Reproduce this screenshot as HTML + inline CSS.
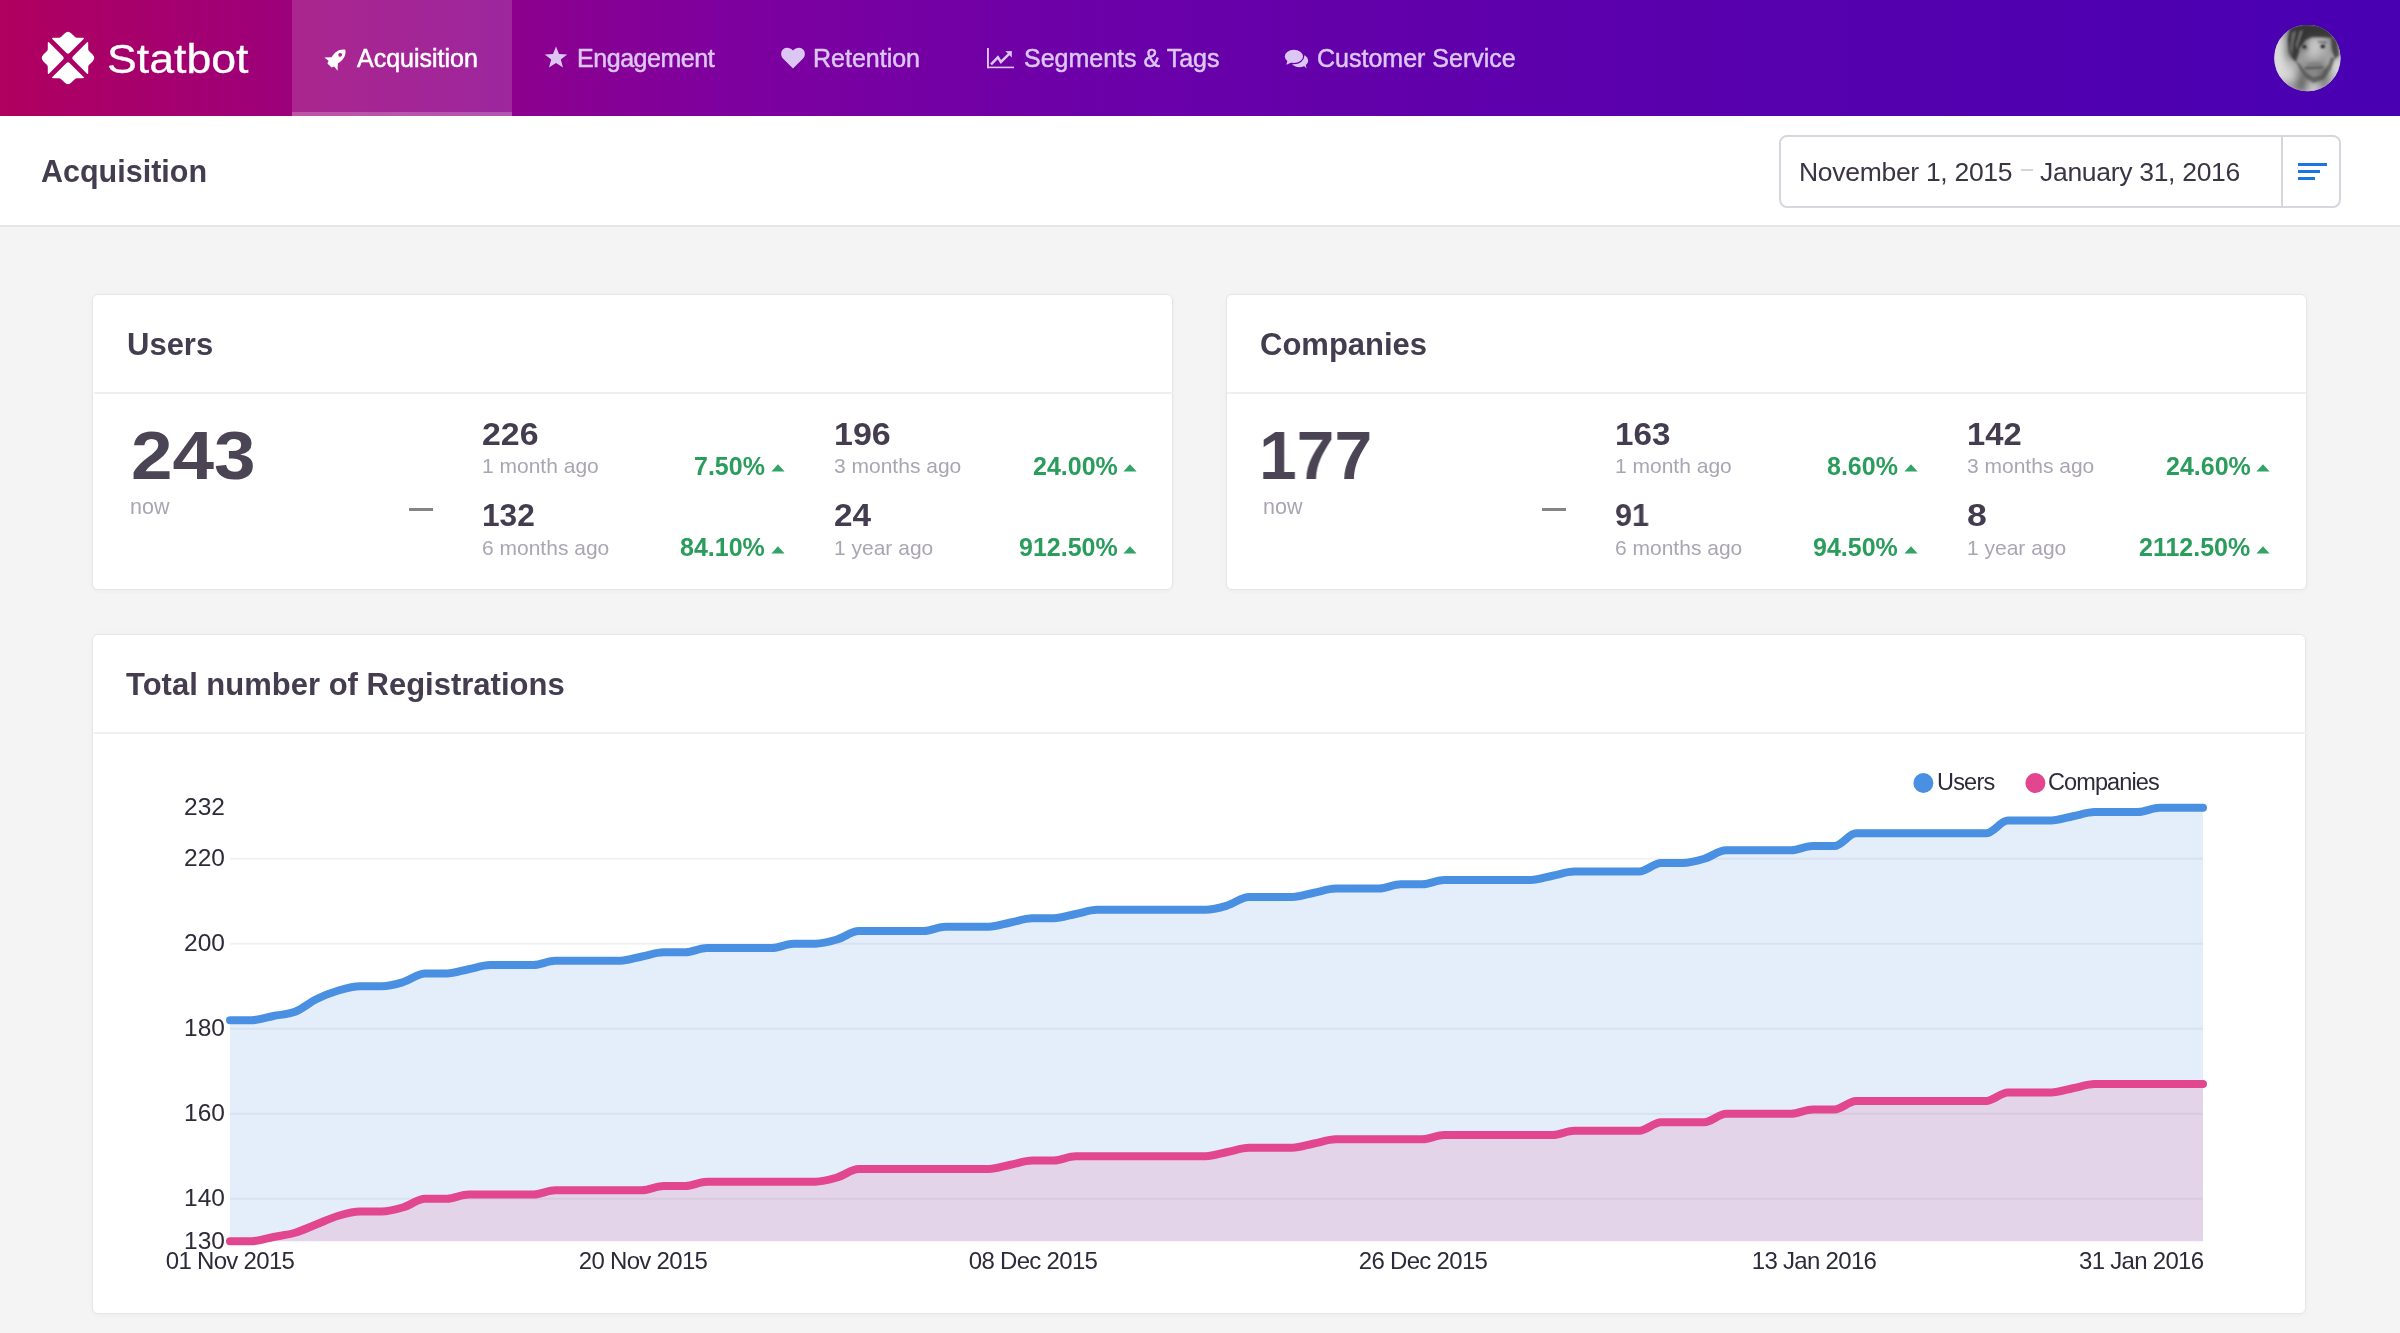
<!DOCTYPE html>
<html><head><meta charset="utf-8"><style>
html,body{margin:0;padding:0;}
body{width:2400px;height:1333px;overflow:hidden;position:relative;background:#f4f4f5;font-family:"Liberation Sans", sans-serif;}
.t{position:absolute;white-space:nowrap;will-change:transform;}
.abs{position:absolute;}
</style></head><body>
<div class="abs" style="left:0;top:0;width:2400px;height:116px;background:linear-gradient(90deg,#b0005f 0%,#9c007a 12%,#7e009e 30%,#6c00a8 45%,#5c00ac 65%,#4800b2 100%);"></div>
<div class="abs" style="left:292px;top:0;width:220px;height:116px;background:rgba(255,255,255,0.15);"></div>
<div class="abs" style="left:292px;top:112px;width:220px;height:4px;background:rgba(255,255,255,0.22);"></div>
<svg class="abs" style="left:40px;top:30px" width="56" height="56" viewBox="-28 -28 56 56">
<g fill="#fff">
<path d="M-3.4,-24.6 Q0,-28 3.4,-24.6 L6.8,-21.2 Q7.8,-20.2 9,-20.2 L14.8,-20.2 Q16.8,-20.2 15.4,-18.8 L1.5,-4.9 Q0,-3.4 -1.5,-4.9 L-15.4,-18.8 Q-16.8,-20.2 -14.8,-20.2 L-9,-20.2 Q-7.8,-20.2 -6.8,-21.2 Z"/><path d="M-3.4,-24.6 Q0,-28 3.4,-24.6 L6.8,-21.2 Q7.8,-20.2 9,-20.2 L14.8,-20.2 Q16.8,-20.2 15.4,-18.8 L1.5,-4.9 Q0,-3.4 -1.5,-4.9 L-15.4,-18.8 Q-16.8,-20.2 -14.8,-20.2 L-9,-20.2 Q-7.8,-20.2 -6.8,-21.2 Z" transform="rotate(90)"/><path d="M-3.4,-24.6 Q0,-28 3.4,-24.6 L6.8,-21.2 Q7.8,-20.2 9,-20.2 L14.8,-20.2 Q16.8,-20.2 15.4,-18.8 L1.5,-4.9 Q0,-3.4 -1.5,-4.9 L-15.4,-18.8 Q-16.8,-20.2 -14.8,-20.2 L-9,-20.2 Q-7.8,-20.2 -6.8,-21.2 Z" transform="rotate(180)"/><path d="M-3.4,-24.6 Q0,-28 3.4,-24.6 L6.8,-21.2 Q7.8,-20.2 9,-20.2 L14.8,-20.2 Q16.8,-20.2 15.4,-18.8 L1.5,-4.9 Q0,-3.4 -1.5,-4.9 L-15.4,-18.8 Q-16.8,-20.2 -14.8,-20.2 L-9,-20.2 Q-7.8,-20.2 -6.8,-21.2 Z" transform="rotate(270)"/>
</g></svg>
<div class="t" style="left:106.5px;top:38.63px;font-size:40.6px;line-height:40.6px;font-weight:400;color:#fff;transform:scaleX(1.1);transform-origin:0 0;-webkit-text-stroke:0.3px #fff;">Statbot</div>
<div class="t" style="left:357px;top:45.64px;font-size:25px;line-height:25px;font-weight:400;color:#fff;-webkit-text-stroke:0.5px currentColor;">Acquisition</div>
<div class="t" style="left:577px;top:45.64px;font-size:25px;line-height:25px;font-weight:400;color:#dcc6f3;letter-spacing:-0.45px;-webkit-text-stroke:0.5px currentColor;">Engagement</div>
<div class="t" style="left:813px;top:45.64px;font-size:25px;line-height:25px;font-weight:400;color:#dcc6f3;-webkit-text-stroke:0.5px currentColor;">Retention</div>
<div class="t" style="left:1023.5px;top:45.64px;font-size:25px;line-height:25px;font-weight:400;color:#dcc6f3;-webkit-text-stroke:0.5px currentColor;">Segments &amp; Tags</div>
<div class="t" style="left:1317px;top:45.64px;font-size:25px;line-height:25px;font-weight:400;color:#dcc6f3;-webkit-text-stroke:0.5px currentColor;">Customer Service</div>
<svg class="abs" style="left:324px;top:46px;overflow:visible" width="25" height="25" viewBox="0 0 24 24">
<g transform="rotate(45 12 12)"><path fill="#fff" fill-rule="evenodd" d="M12 0 C17 3.5 17.5 9 16.3 14.5 L21 19.5 L15.8 19 L14.8 21.5 L9.2 21.5 L8.2 19 L3 19.5 L7.7 14.5 C6.5 9 7 3.5 12 0 Z M12 5.2 a1.8 1.8 0 1 0 0.01 0 Z"/></g></svg>
<svg class="abs" style="left:544px;top:46px" width="24" height="23" viewBox="0 0 24 23">
<path fill="#dcc6f3" d="M12 0.5 L15 8 L23.2 8.4 L16.8 13.6 L19 21.6 L12 17.1 L5 21.6 L7.2 13.6 L0.8 8.4 L9 8 Z"/></svg>
<svg class="abs" style="left:780px;top:47px" width="26" height="22" viewBox="0 0 26 22">
<path fill="#dcc6f3" d="M13 21.5 L3.2 11.8 C0.3 8.8 0.6 4.3 3.4 2.1 C6.2 -0.2 10.2 0.6 13 3.6 C15.8 0.6 19.8 -0.2 22.6 2.1 C25.4 4.3 25.7 8.8 22.8 11.8 Z"/></svg>
<svg class="abs" style="left:987px;top:48px" width="28" height="21" viewBox="0 0 28 21">
<g fill="#dcc6f3"><rect x="0" y="0" width="1.9" height="20.2"/><rect x="0" y="18.6" width="27" height="1.6"/>
<path d="M24.8 2.9 L18.4 3.2 L24.8 9.4 Z"/></g>
<polyline fill="none" stroke="#dcc6f3" stroke-width="2.5" points="4.0,16.4 10.9,9.3 13.9,14.0 22.2,5.9"/></svg>
<svg class="abs" style="left:1284px;top:49px" width="26" height="21" viewBox="0 0 26 21">
<defs><mask id="cm"><rect x="0" y="0" width="26" height="21" fill="#fff"/><ellipse cx="9.9" cy="7.4" rx="10.3" ry="7.8" fill="#000"/><path d="M1.5 11 L0.5 17 L8 14 Z" fill="#000"/></mask></defs>
<g fill="#dcc6f3"><ellipse cx="9.9" cy="7.4" rx="9.1" ry="6.6"/><path d="M3.5 11.5 L2.3 15.8 L8 13.3 Z"/>
<g mask="url(#cm)"><ellipse cx="15.4" cy="11.7" rx="8.8" ry="6.5"/><path d="M18.5 15.5 L22.6 19.4 L21 13.5 Z"/></g></g></svg>
<svg class="abs" style="left:2274px;top:25px" width="67" height="67" viewBox="0 0 67 67">
<defs><clipPath id="av"><circle cx="33.4" cy="33" r="33.2"/></clipPath>
<filter id="bl" x="-20%" y="-20%" width="140%" height="140%"><feGaussianBlur stdDeviation="4"/></filter>
<filter id="bl2" x="-20%" y="-20%" width="140%" height="140%"><feGaussianBlur stdDeviation="1.1"/></filter></defs>
<g clip-path="url(#av)"><rect width="67" height="67" fill="#cfcfcf"/>
<g filter="url(#bl)"><rect x="0.00" y="0.00" width="11.47" height="11.47" fill="#bbb"/><rect x="11.17" y="0.00" width="11.47" height="11.47" fill="#777"/><rect x="22.33" y="0.00" width="11.47" height="11.47" fill="#333"/><rect x="33.50" y="0.00" width="11.47" height="11.47" fill="#333"/><rect x="44.67" y="0.00" width="11.47" height="11.47" fill="#444"/><rect x="55.83" y="0.00" width="11.47" height="11.47" fill="#999"/><rect x="0.00" y="11.17" width="11.47" height="11.47" fill="#ddd"/><rect x="11.17" y="11.17" width="11.47" height="11.47" fill="#555"/><rect x="22.33" y="11.17" width="11.47" height="11.47" fill="#3a3a3a"/><rect x="33.50" y="11.17" width="11.47" height="11.47" fill="#ccc"/><rect x="44.67" y="11.17" width="11.47" height="11.47" fill="#bbb"/><rect x="55.83" y="11.17" width="11.47" height="11.47" fill="#555"/><rect x="0.00" y="22.33" width="11.47" height="11.47" fill="#e0e0e0"/><rect x="11.17" y="22.33" width="11.47" height="11.47" fill="#444"/><rect x="22.33" y="22.33" width="11.47" height="11.47" fill="#999"/><rect x="33.50" y="22.33" width="11.47" height="11.47" fill="#c8c8c8"/><rect x="44.67" y="22.33" width="11.47" height="11.47" fill="#aaa"/><rect x="55.83" y="22.33" width="11.47" height="11.47" fill="#888"/><rect x="0.00" y="33.50" width="11.47" height="11.47" fill="#e0e0e0"/><rect x="11.17" y="33.50" width="11.47" height="11.47" fill="#bbb"/><rect x="22.33" y="33.50" width="11.47" height="11.47" fill="#999"/><rect x="33.50" y="33.50" width="11.47" height="11.47" fill="#8a8a8a"/><rect x="44.67" y="33.50" width="11.47" height="11.47" fill="#888"/><rect x="55.83" y="33.50" width="11.47" height="11.47" fill="#ddd"/><rect x="0.00" y="44.67" width="11.47" height="11.47" fill="#ddd"/><rect x="11.17" y="44.67" width="11.47" height="11.47" fill="#d5d5d5"/><rect x="22.33" y="44.67" width="11.47" height="11.47" fill="#666"/><rect x="33.50" y="44.67" width="11.47" height="11.47" fill="#888"/><rect x="44.67" y="44.67" width="11.47" height="11.47" fill="#666"/><rect x="55.83" y="44.67" width="11.47" height="11.47" fill="#ccc"/><rect x="0.00" y="55.83" width="11.47" height="11.47" fill="#aaa"/><rect x="11.17" y="55.83" width="11.47" height="11.47" fill="#999"/><rect x="22.33" y="55.83" width="11.47" height="11.47" fill="#555"/><rect x="33.50" y="55.83" width="11.47" height="11.47" fill="#ccc"/><rect x="44.67" y="55.83" width="11.47" height="11.47" fill="#888"/><rect x="55.83" y="55.83" width="11.47" height="11.47" fill="#bbb"/></g>
<g filter="url(#bl2)">
<path d="M16 2 L30 -1 L52 1 L60 8 L58 13 L48 12 L38 12 L31 15 L27 21 L24 30 L22 37 L18 33 L15 26 L14 14 Z" fill="#2f2f2f" opacity="0.85"/>
<path d="M18 8 L22 6 L19 20 L18 30 L16 24 Z" fill="#777" opacity="0.8"/><path d="M26 6 L29 5 L25 17 L22 25 L22 19 Z" fill="#888" opacity="0.7"/>
<path d="M57 12 L62 14 L65 30 L61 34 L58 25 Z" fill="#3a3a3a" opacity="0.8"/>
<ellipse cx="30" cy="24" rx="5" ry="3.5" fill="#888" opacity="0.5"/><ellipse cx="30.4" cy="22" rx="2.3" ry="1.8" fill="#151515"/><ellipse cx="48.8" cy="21.4" rx="2.3" ry="1.8" fill="#151515"/>
<path d="M44 16.8 L53 17.5" stroke="#555" stroke-width="1.3"/>
<path d="M31 43 L49 42.4" stroke="#3a3a3a" stroke-width="1.4"/>
<path d="M21 35 L27 46 L33 54 L40 58 L50 54 L57 44 L61 33 L57 32 L54 40 L49 46 L48 50 L40 52 L33 49 L30 45 L26 39 Z" fill="#505050" opacity="0.75"/><path d="M33 38 L40 37 L47 38 L47 41 L33 41 Z" fill="#777" opacity="0.6"/>
</g></g></svg>
<div class="abs" style="left:0;top:116px;width:2400px;height:109px;background:#fff;"></div>
<div class="abs" style="left:0;top:225px;width:2400px;height:2px;background:#e4e6e9;"></div>
<div class="t" style="left:41px;top:155.58px;font-size:30.5px;line-height:30.5px;font-weight:700;color:#433d4f;">Acquisition</div>
<div class="abs" style="left:1779px;top:135px;width:558px;height:69px;border:2px solid #d8d6dc;border-radius:8px;background:#fff;"></div>
<div class="abs" style="left:2281px;top:137px;width:2px;height:69px;background:#d8d6dc;"></div>
<div class="t" style="left:1799px;top:159.37px;font-size:26.5px;line-height:26.5px;font-weight:400;color:#3a3445;letter-spacing:-0.3px;">November 1, 2015</div>
<div class="abs" style="left:2021px;top:169px;width:12px;height:2px;background:#d6d6da;"></div>
<div class="t" style="left:2040px;top:159.37px;font-size:26.5px;line-height:26.5px;font-weight:400;color:#3a3445;letter-spacing:-0.3px;">January 31, 2016</div>
<div class="abs" style="left:2298px;top:163px;width:29px;height:3.3px;background:#1b74e4;"></div>
<div class="abs" style="left:2298px;top:170px;width:22px;height:3.3px;background:#1b74e4;"></div>
<div class="abs" style="left:2298px;top:177px;width:17px;height:3.3px;background:#1b74e4;"></div>
<div class="abs" style="left:92px;top:293.5px;width:1079px;height:294.5px;background:#fff;border:1.5px solid #e6e5ea;border-radius:6px;box-shadow:0 0 10px rgba(0,0,0,0.02),0 2px 5px rgba(0,0,0,0.02);"></div>
<div class="abs" style="left:93.5px;top:391.5px;width:1079px;height:2px;background:#f0eff2;"></div>
<div class="abs" style="left:1225.5px;top:293.5px;width:1079px;height:294.5px;background:#fff;border:1.5px solid #e6e5ea;border-radius:6px;box-shadow:0 0 10px rgba(0,0,0,0.02),0 2px 5px rgba(0,0,0,0.02);"></div>
<div class="abs" style="left:1227.0px;top:391.5px;width:1079px;height:2px;background:#f0eff2;"></div>
<div class="abs" style="left:92px;top:633.5px;width:2212px;height:678.5px;background:#fff;border:1.5px solid #e6e5ea;border-radius:6px;box-shadow:0 0 10px rgba(0,0,0,0.02),0 2px 5px rgba(0,0,0,0.02);"></div>
<div class="abs" style="left:93.5px;top:731.5px;width:2212px;height:2px;background:#f0eff2;"></div>
<div class="t" style="left:127px;top:328.86px;font-size:31px;line-height:31px;font-weight:700;color:#433d4f;">Users</div>
<div class="t" style="left:130.5px;top:421.81px;font-size:68.5px;line-height:68.5px;font-weight:700;color:#4a4454;transform:scaleX(1.09);transform-origin:0 0;">243</div>
<div class="t" style="left:129.5px;top:496.80px;font-size:21.5px;line-height:21.5px;font-weight:400;color:#aaa5b3;">now</div>
<div class="abs" style="left:409px;top:508px;width:23.5px;height:3px;background:#858585;"></div>
<div class="t" style="left:482px;top:418.56px;font-size:31px;line-height:31px;font-weight:700;color:#433d4f;transform:scaleX(1.094);transform-origin:0 0;">226</div>
<div class="t" style="left:482px;top:455.22px;font-size:21px;line-height:21px;font-weight:400;color:#aaa5b3;">1 month ago</div>
<div class="t" style="right:1635px;top:453.74px;font-size:25px;line-height:25px;font-weight:700;color:#2a9d5c;">7.50%</div>
<svg class="abs" style="left:771px;top:464.0px" width="14" height="8" viewBox="0 0 14 8"><path d="M7 0.2 L13.6 7.6 L0.4 7.6 Z" fill="#33a465"/></svg>
<div class="t" style="left:482px;top:500.16px;font-size:31px;line-height:31px;font-weight:700;color:#433d4f;transform:scaleX(1.02);transform-origin:0 0;">132</div>
<div class="t" style="left:482px;top:536.92px;font-size:21px;line-height:21px;font-weight:400;color:#aaa5b3;">6 months ago</div>
<div class="t" style="right:1635px;top:535.34px;font-size:25px;line-height:25px;font-weight:700;color:#2a9d5c;">84.10%</div>
<svg class="abs" style="left:771px;top:545.6px" width="14" height="8" viewBox="0 0 14 8"><path d="M7 0.2 L13.6 7.6 L0.4 7.6 Z" fill="#33a465"/></svg>
<div class="t" style="left:834px;top:418.56px;font-size:31px;line-height:31px;font-weight:700;color:#433d4f;transform:scaleX(1.097);transform-origin:0 0;">196</div>
<div class="t" style="left:834px;top:455.22px;font-size:21px;line-height:21px;font-weight:400;color:#aaa5b3;">3 months ago</div>
<div class="t" style="right:1282.7px;top:453.74px;font-size:25px;line-height:25px;font-weight:700;color:#2a9d5c;">24.00%</div>
<svg class="abs" style="left:1123.3px;top:464.0px" width="14" height="8" viewBox="0 0 14 8"><path d="M7 0.2 L13.6 7.6 L0.4 7.6 Z" fill="#33a465"/></svg>
<div class="t" style="left:834px;top:500.16px;font-size:31px;line-height:31px;font-weight:700;color:#433d4f;transform:scaleX(1.076);transform-origin:0 0;">24</div>
<div class="t" style="left:834px;top:536.92px;font-size:21px;line-height:21px;font-weight:400;color:#aaa5b3;">1 year ago</div>
<div class="t" style="right:1282.7px;top:535.34px;font-size:25px;line-height:25px;font-weight:700;color:#2a9d5c;">912.50%</div>
<svg class="abs" style="left:1123.3px;top:545.6px" width="14" height="8" viewBox="0 0 14 8"><path d="M7 0.2 L13.6 7.6 L0.4 7.6 Z" fill="#33a465"/></svg>
<div class="t" style="left:1260px;top:328.86px;font-size:31px;line-height:31px;font-weight:700;color:#433d4f;">Companies</div>
<div class="t" style="left:1259px;top:421.81px;font-size:68.5px;line-height:68.5px;font-weight:700;color:#4a4454;transform:scaleX(0.99);transform-origin:0 0;">177</div>
<div class="t" style="left:1262.5px;top:496.80px;font-size:21.5px;line-height:21.5px;font-weight:400;color:#aaa5b3;">now</div>
<div class="abs" style="left:1542px;top:508px;width:23.5px;height:3px;background:#858585;"></div>
<div class="t" style="left:1615px;top:418.56px;font-size:31px;line-height:31px;font-weight:700;color:#433d4f;transform:scaleX(1.07);transform-origin:0 0;">163</div>
<div class="t" style="left:1615px;top:455.22px;font-size:21px;line-height:21px;font-weight:400;color:#aaa5b3;">1 month ago</div>
<div class="t" style="right:502px;top:453.74px;font-size:25px;line-height:25px;font-weight:700;color:#2a9d5c;">8.60%</div>
<svg class="abs" style="left:1904px;top:464.0px" width="14" height="8" viewBox="0 0 14 8"><path d="M7 0.2 L13.6 7.6 L0.4 7.6 Z" fill="#33a465"/></svg>
<div class="t" style="left:1615px;top:500.16px;font-size:31px;line-height:31px;font-weight:700;color:#433d4f;transform:scaleX(0.985);transform-origin:0 0;">91</div>
<div class="t" style="left:1615px;top:536.92px;font-size:21px;line-height:21px;font-weight:400;color:#aaa5b3;">6 months ago</div>
<div class="t" style="right:502px;top:535.34px;font-size:25px;line-height:25px;font-weight:700;color:#2a9d5c;">94.50%</div>
<svg class="abs" style="left:1904px;top:545.6px" width="14" height="8" viewBox="0 0 14 8"><path d="M7 0.2 L13.6 7.6 L0.4 7.6 Z" fill="#33a465"/></svg>
<div class="t" style="left:1967px;top:418.56px;font-size:31px;line-height:31px;font-weight:700;color:#433d4f;transform:scaleX(1.056);transform-origin:0 0;">142</div>
<div class="t" style="left:1967px;top:455.22px;font-size:21px;line-height:21px;font-weight:400;color:#aaa5b3;">3 months ago</div>
<div class="t" style="right:149.69999999999982px;top:453.74px;font-size:25px;line-height:25px;font-weight:700;color:#2a9d5c;">24.60%</div>
<svg class="abs" style="left:2256.3px;top:464.0px" width="14" height="8" viewBox="0 0 14 8"><path d="M7 0.2 L13.6 7.6 L0.4 7.6 Z" fill="#33a465"/></svg>
<div class="t" style="left:1967px;top:500.16px;font-size:31px;line-height:31px;font-weight:700;color:#433d4f;transform:scaleX(1.15);transform-origin:0 0;">8</div>
<div class="t" style="left:1967px;top:536.92px;font-size:21px;line-height:21px;font-weight:400;color:#aaa5b3;">1 year ago</div>
<div class="t" style="right:149.69999999999982px;top:535.34px;font-size:25px;line-height:25px;font-weight:700;color:#2a9d5c;">2112.50%</div>
<svg class="abs" style="left:2256.3px;top:545.6px" width="14" height="8" viewBox="0 0 14 8"><path d="M7 0.2 L13.6 7.6 L0.4 7.6 Z" fill="#33a465"/></svg>
<div class="t" style="left:126px;top:668.96px;font-size:31px;line-height:31px;font-weight:700;color:#433d4f;">Total number of Registrations</div>
<svg class="abs" style="left:0;top:0" width="2400" height="1333" viewBox="0 0 2400 1333"><path d="M230.00,1020.25C237.23,1020.25 244.45,1020.25 251.68,1020.25C258.91,1020.25 266.14,1017.42 273.36,1016.00C280.59,1014.58 287.82,1014.58 295.04,1011.75C302.27,1008.92 309.50,1002.54 316.73,999.00C323.95,995.46 331.18,992.62 338.41,990.50C345.63,988.38 352.86,986.25 360.09,986.25C367.32,986.25 374.54,986.25 381.77,986.25C389.00,986.25 396.22,984.12 403.45,982.00C410.68,979.88 417.90,973.50 425.13,973.50C432.36,973.50 439.59,973.50 446.81,973.50C454.04,973.50 461.27,970.67 468.49,969.25C475.72,967.83 482.95,965.00 490.18,965.00C497.40,965.00 504.63,965.00 511.86,965.00C519.08,965.00 526.31,965.00 533.54,965.00C540.77,965.00 547.99,960.75 555.22,960.75C562.45,960.75 569.67,960.75 576.90,960.75C584.13,960.75 591.36,960.75 598.58,960.75C605.81,960.75 613.04,960.75 620.26,960.75C627.49,960.75 634.72,957.92 641.95,956.50C649.17,955.08 656.40,952.25 663.63,952.25C670.85,952.25 678.08,952.25 685.31,952.25C692.53,952.25 699.76,948.00 706.99,948.00C714.22,948.00 721.44,948.00 728.67,948.00C735.90,948.00 743.12,948.00 750.35,948.00C757.58,948.00 764.81,948.00 772.03,948.00C779.26,948.00 786.49,943.75 793.71,943.75C800.94,943.75 808.17,943.75 815.40,943.75C822.62,943.75 829.85,941.62 837.08,939.50C844.30,937.38 851.53,931.00 858.76,931.00C865.99,931.00 873.21,931.00 880.44,931.00C887.67,931.00 894.89,931.00 902.12,931.00C909.35,931.00 916.58,931.00 923.80,931.00C931.03,931.00 938.26,926.75 945.48,926.75C952.71,926.75 959.94,926.75 967.16,926.75C974.39,926.75 981.62,926.75 988.85,926.75C996.07,926.75 1003.30,923.92 1010.53,922.50C1017.75,921.08 1024.98,918.25 1032.21,918.25C1039.44,918.25 1046.66,918.25 1053.89,918.25C1061.12,918.25 1068.34,915.42 1075.57,914.00C1082.80,912.58 1090.03,909.75 1097.25,909.75C1104.48,909.75 1111.71,909.75 1118.93,909.75C1126.16,909.75 1133.39,909.75 1140.62,909.75C1147.84,909.75 1155.07,909.75 1162.30,909.75C1169.52,909.75 1176.75,909.75 1183.98,909.75C1191.21,909.75 1198.43,909.75 1205.66,909.75C1212.89,909.75 1220.11,907.62 1227.34,905.50C1234.57,903.38 1241.79,897.00 1249.02,897.00C1256.25,897.00 1263.48,897.00 1270.70,897.00C1277.93,897.00 1285.16,897.00 1292.38,897.00C1299.61,897.00 1306.84,894.17 1314.07,892.75C1321.29,891.33 1328.52,888.50 1335.75,888.50C1342.97,888.50 1350.20,888.50 1357.43,888.50C1364.66,888.50 1371.88,888.50 1379.11,888.50C1386.34,888.50 1393.56,884.25 1400.79,884.25C1408.02,884.25 1415.25,884.25 1422.47,884.25C1429.70,884.25 1436.93,880.00 1444.15,880.00C1451.38,880.00 1458.61,880.00 1465.84,880.00C1473.06,880.00 1480.29,880.00 1487.52,880.00C1494.74,880.00 1501.97,880.00 1509.20,880.00C1516.42,880.00 1523.65,880.00 1530.88,880.00C1538.11,880.00 1545.33,877.17 1552.56,875.75C1559.79,874.33 1567.01,871.50 1574.24,871.50C1581.47,871.50 1588.70,871.50 1595.92,871.50C1603.15,871.50 1610.38,871.50 1617.60,871.50C1624.83,871.50 1632.06,871.50 1639.29,871.50C1646.51,871.50 1653.74,863.00 1660.97,863.00C1668.19,863.00 1675.42,863.00 1682.65,863.00C1689.88,863.00 1697.10,860.88 1704.33,858.75C1711.56,856.62 1718.78,850.25 1726.01,850.25C1733.24,850.25 1740.47,850.25 1747.69,850.25C1754.92,850.25 1762.15,850.25 1769.37,850.25C1776.60,850.25 1783.83,850.25 1791.05,850.25C1798.28,850.25 1805.51,846.00 1812.74,846.00C1819.96,846.00 1827.19,846.00 1834.42,846.00C1841.64,846.00 1848.87,833.25 1856.10,833.25C1863.33,833.25 1870.55,833.25 1877.78,833.25C1885.01,833.25 1892.23,833.25 1899.46,833.25C1906.69,833.25 1913.92,833.25 1921.14,833.25C1928.37,833.25 1935.60,833.25 1942.82,833.25C1950.05,833.25 1957.28,833.25 1964.51,833.25C1971.73,833.25 1978.96,833.25 1986.19,833.25C1993.41,833.25 2000.64,820.50 2007.87,820.50C2015.10,820.50 2022.32,820.50 2029.55,820.50C2036.78,820.50 2044.00,820.50 2051.23,820.50C2058.46,820.50 2065.68,817.67 2072.91,816.25C2080.14,814.83 2087.37,812.00 2094.59,812.00C2101.82,812.00 2109.05,812.00 2116.27,812.00C2123.50,812.00 2130.73,812.00 2137.96,812.00C2145.18,812.00 2152.41,807.75 2159.64,807.75C2166.86,807.75 2174.09,807.75 2181.32,807.75C2188.55,807.75 2195.77,807.75 2203.00,807.75L2203.00,1241.25L230.00,1241.25Z" fill="rgba(74,144,226,0.15)"/><path d="M230.00,1241.25C237.23,1241.25 244.45,1241.25 251.68,1241.25C258.91,1241.25 266.14,1238.42 273.36,1237.00C280.59,1235.58 287.82,1234.88 295.04,1232.75C302.27,1230.62 309.50,1227.08 316.73,1224.25C323.95,1221.42 331.18,1217.88 338.41,1215.75C345.63,1213.62 352.86,1211.50 360.09,1211.50C367.32,1211.50 374.54,1211.50 381.77,1211.50C389.00,1211.50 396.22,1209.38 403.45,1207.25C410.68,1205.12 417.90,1198.75 425.13,1198.75C432.36,1198.75 439.59,1198.75 446.81,1198.75C454.04,1198.75 461.27,1194.50 468.49,1194.50C475.72,1194.50 482.95,1194.50 490.18,1194.50C497.40,1194.50 504.63,1194.50 511.86,1194.50C519.08,1194.50 526.31,1194.50 533.54,1194.50C540.77,1194.50 547.99,1190.25 555.22,1190.25C562.45,1190.25 569.67,1190.25 576.90,1190.25C584.13,1190.25 591.36,1190.25 598.58,1190.25C605.81,1190.25 613.04,1190.25 620.26,1190.25C627.49,1190.25 634.72,1190.25 641.95,1190.25C649.17,1190.25 656.40,1186.00 663.63,1186.00C670.85,1186.00 678.08,1186.00 685.31,1186.00C692.53,1186.00 699.76,1181.75 706.99,1181.75C714.22,1181.75 721.44,1181.75 728.67,1181.75C735.90,1181.75 743.12,1181.75 750.35,1181.75C757.58,1181.75 764.81,1181.75 772.03,1181.75C779.26,1181.75 786.49,1181.75 793.71,1181.75C800.94,1181.75 808.17,1181.75 815.40,1181.75C822.62,1181.75 829.85,1179.62 837.08,1177.50C844.30,1175.38 851.53,1169.00 858.76,1169.00C865.99,1169.00 873.21,1169.00 880.44,1169.00C887.67,1169.00 894.89,1169.00 902.12,1169.00C909.35,1169.00 916.58,1169.00 923.80,1169.00C931.03,1169.00 938.26,1169.00 945.48,1169.00C952.71,1169.00 959.94,1169.00 967.16,1169.00C974.39,1169.00 981.62,1169.00 988.85,1169.00C996.07,1169.00 1003.30,1166.17 1010.53,1164.75C1017.75,1163.33 1024.98,1160.50 1032.21,1160.50C1039.44,1160.50 1046.66,1160.50 1053.89,1160.50C1061.12,1160.50 1068.34,1156.25 1075.57,1156.25C1082.80,1156.25 1090.03,1156.25 1097.25,1156.25C1104.48,1156.25 1111.71,1156.25 1118.93,1156.25C1126.16,1156.25 1133.39,1156.25 1140.62,1156.25C1147.84,1156.25 1155.07,1156.25 1162.30,1156.25C1169.52,1156.25 1176.75,1156.25 1183.98,1156.25C1191.21,1156.25 1198.43,1156.25 1205.66,1156.25C1212.89,1156.25 1220.11,1153.42 1227.34,1152.00C1234.57,1150.58 1241.79,1147.75 1249.02,1147.75C1256.25,1147.75 1263.48,1147.75 1270.70,1147.75C1277.93,1147.75 1285.16,1147.75 1292.38,1147.75C1299.61,1147.75 1306.84,1144.92 1314.07,1143.50C1321.29,1142.08 1328.52,1139.25 1335.75,1139.25C1342.97,1139.25 1350.20,1139.25 1357.43,1139.25C1364.66,1139.25 1371.88,1139.25 1379.11,1139.25C1386.34,1139.25 1393.56,1139.25 1400.79,1139.25C1408.02,1139.25 1415.25,1139.25 1422.47,1139.25C1429.70,1139.25 1436.93,1135.00 1444.15,1135.00C1451.38,1135.00 1458.61,1135.00 1465.84,1135.00C1473.06,1135.00 1480.29,1135.00 1487.52,1135.00C1494.74,1135.00 1501.97,1135.00 1509.20,1135.00C1516.42,1135.00 1523.65,1135.00 1530.88,1135.00C1538.11,1135.00 1545.33,1135.00 1552.56,1135.00C1559.79,1135.00 1567.01,1130.75 1574.24,1130.75C1581.47,1130.75 1588.70,1130.75 1595.92,1130.75C1603.15,1130.75 1610.38,1130.75 1617.60,1130.75C1624.83,1130.75 1632.06,1130.75 1639.29,1130.75C1646.51,1130.75 1653.74,1122.25 1660.97,1122.25C1668.19,1122.25 1675.42,1122.25 1682.65,1122.25C1689.88,1122.25 1697.10,1122.25 1704.33,1122.25C1711.56,1122.25 1718.78,1113.75 1726.01,1113.75C1733.24,1113.75 1740.47,1113.75 1747.69,1113.75C1754.92,1113.75 1762.15,1113.75 1769.37,1113.75C1776.60,1113.75 1783.83,1113.75 1791.05,1113.75C1798.28,1113.75 1805.51,1109.50 1812.74,1109.50C1819.96,1109.50 1827.19,1109.50 1834.42,1109.50C1841.64,1109.50 1848.87,1101.00 1856.10,1101.00C1863.33,1101.00 1870.55,1101.00 1877.78,1101.00C1885.01,1101.00 1892.23,1101.00 1899.46,1101.00C1906.69,1101.00 1913.92,1101.00 1921.14,1101.00C1928.37,1101.00 1935.60,1101.00 1942.82,1101.00C1950.05,1101.00 1957.28,1101.00 1964.51,1101.00C1971.73,1101.00 1978.96,1101.00 1986.19,1101.00C1993.41,1101.00 2000.64,1092.50 2007.87,1092.50C2015.10,1092.50 2022.32,1092.50 2029.55,1092.50C2036.78,1092.50 2044.00,1092.50 2051.23,1092.50C2058.46,1092.50 2065.68,1089.67 2072.91,1088.25C2080.14,1086.83 2087.37,1084.00 2094.59,1084.00C2101.82,1084.00 2109.05,1084.00 2116.27,1084.00C2123.50,1084.00 2130.73,1084.00 2137.96,1084.00C2145.18,1084.00 2152.41,1084.00 2159.64,1084.00C2166.86,1084.00 2174.09,1084.00 2181.32,1084.00C2188.55,1084.00 2195.77,1084.00 2203.00,1084.00L2203.00,1241.25L230.00,1241.25Z" fill="rgba(226,70,143,0.15)"/><rect x="230" y="857.75" width="1973" height="2" fill="rgba(60,60,90,0.07)"/><rect x="230" y="942.75" width="1973" height="2" fill="rgba(60,60,90,0.07)"/><rect x="230" y="1027.75" width="1973" height="2" fill="rgba(60,60,90,0.07)"/><rect x="230" y="1112.75" width="1973" height="2" fill="rgba(60,60,90,0.07)"/><rect x="230" y="1197.75" width="1973" height="2" fill="rgba(60,60,90,0.07)"/><path d="M230.00,1020.25C237.23,1020.25 244.45,1020.25 251.68,1020.25C258.91,1020.25 266.14,1017.42 273.36,1016.00C280.59,1014.58 287.82,1014.58 295.04,1011.75C302.27,1008.92 309.50,1002.54 316.73,999.00C323.95,995.46 331.18,992.62 338.41,990.50C345.63,988.38 352.86,986.25 360.09,986.25C367.32,986.25 374.54,986.25 381.77,986.25C389.00,986.25 396.22,984.12 403.45,982.00C410.68,979.88 417.90,973.50 425.13,973.50C432.36,973.50 439.59,973.50 446.81,973.50C454.04,973.50 461.27,970.67 468.49,969.25C475.72,967.83 482.95,965.00 490.18,965.00C497.40,965.00 504.63,965.00 511.86,965.00C519.08,965.00 526.31,965.00 533.54,965.00C540.77,965.00 547.99,960.75 555.22,960.75C562.45,960.75 569.67,960.75 576.90,960.75C584.13,960.75 591.36,960.75 598.58,960.75C605.81,960.75 613.04,960.75 620.26,960.75C627.49,960.75 634.72,957.92 641.95,956.50C649.17,955.08 656.40,952.25 663.63,952.25C670.85,952.25 678.08,952.25 685.31,952.25C692.53,952.25 699.76,948.00 706.99,948.00C714.22,948.00 721.44,948.00 728.67,948.00C735.90,948.00 743.12,948.00 750.35,948.00C757.58,948.00 764.81,948.00 772.03,948.00C779.26,948.00 786.49,943.75 793.71,943.75C800.94,943.75 808.17,943.75 815.40,943.75C822.62,943.75 829.85,941.62 837.08,939.50C844.30,937.38 851.53,931.00 858.76,931.00C865.99,931.00 873.21,931.00 880.44,931.00C887.67,931.00 894.89,931.00 902.12,931.00C909.35,931.00 916.58,931.00 923.80,931.00C931.03,931.00 938.26,926.75 945.48,926.75C952.71,926.75 959.94,926.75 967.16,926.75C974.39,926.75 981.62,926.75 988.85,926.75C996.07,926.75 1003.30,923.92 1010.53,922.50C1017.75,921.08 1024.98,918.25 1032.21,918.25C1039.44,918.25 1046.66,918.25 1053.89,918.25C1061.12,918.25 1068.34,915.42 1075.57,914.00C1082.80,912.58 1090.03,909.75 1097.25,909.75C1104.48,909.75 1111.71,909.75 1118.93,909.75C1126.16,909.75 1133.39,909.75 1140.62,909.75C1147.84,909.75 1155.07,909.75 1162.30,909.75C1169.52,909.75 1176.75,909.75 1183.98,909.75C1191.21,909.75 1198.43,909.75 1205.66,909.75C1212.89,909.75 1220.11,907.62 1227.34,905.50C1234.57,903.38 1241.79,897.00 1249.02,897.00C1256.25,897.00 1263.48,897.00 1270.70,897.00C1277.93,897.00 1285.16,897.00 1292.38,897.00C1299.61,897.00 1306.84,894.17 1314.07,892.75C1321.29,891.33 1328.52,888.50 1335.75,888.50C1342.97,888.50 1350.20,888.50 1357.43,888.50C1364.66,888.50 1371.88,888.50 1379.11,888.50C1386.34,888.50 1393.56,884.25 1400.79,884.25C1408.02,884.25 1415.25,884.25 1422.47,884.25C1429.70,884.25 1436.93,880.00 1444.15,880.00C1451.38,880.00 1458.61,880.00 1465.84,880.00C1473.06,880.00 1480.29,880.00 1487.52,880.00C1494.74,880.00 1501.97,880.00 1509.20,880.00C1516.42,880.00 1523.65,880.00 1530.88,880.00C1538.11,880.00 1545.33,877.17 1552.56,875.75C1559.79,874.33 1567.01,871.50 1574.24,871.50C1581.47,871.50 1588.70,871.50 1595.92,871.50C1603.15,871.50 1610.38,871.50 1617.60,871.50C1624.83,871.50 1632.06,871.50 1639.29,871.50C1646.51,871.50 1653.74,863.00 1660.97,863.00C1668.19,863.00 1675.42,863.00 1682.65,863.00C1689.88,863.00 1697.10,860.88 1704.33,858.75C1711.56,856.62 1718.78,850.25 1726.01,850.25C1733.24,850.25 1740.47,850.25 1747.69,850.25C1754.92,850.25 1762.15,850.25 1769.37,850.25C1776.60,850.25 1783.83,850.25 1791.05,850.25C1798.28,850.25 1805.51,846.00 1812.74,846.00C1819.96,846.00 1827.19,846.00 1834.42,846.00C1841.64,846.00 1848.87,833.25 1856.10,833.25C1863.33,833.25 1870.55,833.25 1877.78,833.25C1885.01,833.25 1892.23,833.25 1899.46,833.25C1906.69,833.25 1913.92,833.25 1921.14,833.25C1928.37,833.25 1935.60,833.25 1942.82,833.25C1950.05,833.25 1957.28,833.25 1964.51,833.25C1971.73,833.25 1978.96,833.25 1986.19,833.25C1993.41,833.25 2000.64,820.50 2007.87,820.50C2015.10,820.50 2022.32,820.50 2029.55,820.50C2036.78,820.50 2044.00,820.50 2051.23,820.50C2058.46,820.50 2065.68,817.67 2072.91,816.25C2080.14,814.83 2087.37,812.00 2094.59,812.00C2101.82,812.00 2109.05,812.00 2116.27,812.00C2123.50,812.00 2130.73,812.00 2137.96,812.00C2145.18,812.00 2152.41,807.75 2159.64,807.75C2166.86,807.75 2174.09,807.75 2181.32,807.75C2188.55,807.75 2195.77,807.75 2203.00,807.75" fill="none" stroke="#4a90e2" stroke-width="8" stroke-linecap="round" stroke-linejoin="round"/><path d="M230.00,1241.25C237.23,1241.25 244.45,1241.25 251.68,1241.25C258.91,1241.25 266.14,1238.42 273.36,1237.00C280.59,1235.58 287.82,1234.88 295.04,1232.75C302.27,1230.62 309.50,1227.08 316.73,1224.25C323.95,1221.42 331.18,1217.88 338.41,1215.75C345.63,1213.62 352.86,1211.50 360.09,1211.50C367.32,1211.50 374.54,1211.50 381.77,1211.50C389.00,1211.50 396.22,1209.38 403.45,1207.25C410.68,1205.12 417.90,1198.75 425.13,1198.75C432.36,1198.75 439.59,1198.75 446.81,1198.75C454.04,1198.75 461.27,1194.50 468.49,1194.50C475.72,1194.50 482.95,1194.50 490.18,1194.50C497.40,1194.50 504.63,1194.50 511.86,1194.50C519.08,1194.50 526.31,1194.50 533.54,1194.50C540.77,1194.50 547.99,1190.25 555.22,1190.25C562.45,1190.25 569.67,1190.25 576.90,1190.25C584.13,1190.25 591.36,1190.25 598.58,1190.25C605.81,1190.25 613.04,1190.25 620.26,1190.25C627.49,1190.25 634.72,1190.25 641.95,1190.25C649.17,1190.25 656.40,1186.00 663.63,1186.00C670.85,1186.00 678.08,1186.00 685.31,1186.00C692.53,1186.00 699.76,1181.75 706.99,1181.75C714.22,1181.75 721.44,1181.75 728.67,1181.75C735.90,1181.75 743.12,1181.75 750.35,1181.75C757.58,1181.75 764.81,1181.75 772.03,1181.75C779.26,1181.75 786.49,1181.75 793.71,1181.75C800.94,1181.75 808.17,1181.75 815.40,1181.75C822.62,1181.75 829.85,1179.62 837.08,1177.50C844.30,1175.38 851.53,1169.00 858.76,1169.00C865.99,1169.00 873.21,1169.00 880.44,1169.00C887.67,1169.00 894.89,1169.00 902.12,1169.00C909.35,1169.00 916.58,1169.00 923.80,1169.00C931.03,1169.00 938.26,1169.00 945.48,1169.00C952.71,1169.00 959.94,1169.00 967.16,1169.00C974.39,1169.00 981.62,1169.00 988.85,1169.00C996.07,1169.00 1003.30,1166.17 1010.53,1164.75C1017.75,1163.33 1024.98,1160.50 1032.21,1160.50C1039.44,1160.50 1046.66,1160.50 1053.89,1160.50C1061.12,1160.50 1068.34,1156.25 1075.57,1156.25C1082.80,1156.25 1090.03,1156.25 1097.25,1156.25C1104.48,1156.25 1111.71,1156.25 1118.93,1156.25C1126.16,1156.25 1133.39,1156.25 1140.62,1156.25C1147.84,1156.25 1155.07,1156.25 1162.30,1156.25C1169.52,1156.25 1176.75,1156.25 1183.98,1156.25C1191.21,1156.25 1198.43,1156.25 1205.66,1156.25C1212.89,1156.25 1220.11,1153.42 1227.34,1152.00C1234.57,1150.58 1241.79,1147.75 1249.02,1147.75C1256.25,1147.75 1263.48,1147.75 1270.70,1147.75C1277.93,1147.75 1285.16,1147.75 1292.38,1147.75C1299.61,1147.75 1306.84,1144.92 1314.07,1143.50C1321.29,1142.08 1328.52,1139.25 1335.75,1139.25C1342.97,1139.25 1350.20,1139.25 1357.43,1139.25C1364.66,1139.25 1371.88,1139.25 1379.11,1139.25C1386.34,1139.25 1393.56,1139.25 1400.79,1139.25C1408.02,1139.25 1415.25,1139.25 1422.47,1139.25C1429.70,1139.25 1436.93,1135.00 1444.15,1135.00C1451.38,1135.00 1458.61,1135.00 1465.84,1135.00C1473.06,1135.00 1480.29,1135.00 1487.52,1135.00C1494.74,1135.00 1501.97,1135.00 1509.20,1135.00C1516.42,1135.00 1523.65,1135.00 1530.88,1135.00C1538.11,1135.00 1545.33,1135.00 1552.56,1135.00C1559.79,1135.00 1567.01,1130.75 1574.24,1130.75C1581.47,1130.75 1588.70,1130.75 1595.92,1130.75C1603.15,1130.75 1610.38,1130.75 1617.60,1130.75C1624.83,1130.75 1632.06,1130.75 1639.29,1130.75C1646.51,1130.75 1653.74,1122.25 1660.97,1122.25C1668.19,1122.25 1675.42,1122.25 1682.65,1122.25C1689.88,1122.25 1697.10,1122.25 1704.33,1122.25C1711.56,1122.25 1718.78,1113.75 1726.01,1113.75C1733.24,1113.75 1740.47,1113.75 1747.69,1113.75C1754.92,1113.75 1762.15,1113.75 1769.37,1113.75C1776.60,1113.75 1783.83,1113.75 1791.05,1113.75C1798.28,1113.75 1805.51,1109.50 1812.74,1109.50C1819.96,1109.50 1827.19,1109.50 1834.42,1109.50C1841.64,1109.50 1848.87,1101.00 1856.10,1101.00C1863.33,1101.00 1870.55,1101.00 1877.78,1101.00C1885.01,1101.00 1892.23,1101.00 1899.46,1101.00C1906.69,1101.00 1913.92,1101.00 1921.14,1101.00C1928.37,1101.00 1935.60,1101.00 1942.82,1101.00C1950.05,1101.00 1957.28,1101.00 1964.51,1101.00C1971.73,1101.00 1978.96,1101.00 1986.19,1101.00C1993.41,1101.00 2000.64,1092.50 2007.87,1092.50C2015.10,1092.50 2022.32,1092.50 2029.55,1092.50C2036.78,1092.50 2044.00,1092.50 2051.23,1092.50C2058.46,1092.50 2065.68,1089.67 2072.91,1088.25C2080.14,1086.83 2087.37,1084.00 2094.59,1084.00C2101.82,1084.00 2109.05,1084.00 2116.27,1084.00C2123.50,1084.00 2130.73,1084.00 2137.96,1084.00C2145.18,1084.00 2152.41,1084.00 2159.64,1084.00C2166.86,1084.00 2174.09,1084.00 2181.32,1084.00C2188.55,1084.00 2195.77,1084.00 2203.00,1084.00" fill="none" stroke="#e2468f" stroke-width="8" stroke-linecap="round" stroke-linejoin="round"/><circle cx="1923.4" cy="783" r="10" fill="#4a90e2"/><circle cx="2035.4" cy="783" r="10" fill="#e2468f"/></svg>
<div class="t" style="right:2175.5px;top:795.01px;font-size:24.5px;line-height:24.5px;font-weight:400;color:#2f2a3a;">232</div>
<div class="t" style="right:2175.5px;top:846.01px;font-size:24.5px;line-height:24.5px;font-weight:400;color:#2f2a3a;">220</div>
<div class="t" style="right:2175.5px;top:931.01px;font-size:24.5px;line-height:24.5px;font-weight:400;color:#2f2a3a;">200</div>
<div class="t" style="right:2175.5px;top:1016.01px;font-size:24.5px;line-height:24.5px;font-weight:400;color:#2f2a3a;">180</div>
<div class="t" style="right:2175.5px;top:1101.01px;font-size:24.5px;line-height:24.5px;font-weight:400;color:#2f2a3a;">160</div>
<div class="t" style="right:2175.5px;top:1186.01px;font-size:24.5px;line-height:24.5px;font-weight:400;color:#2f2a3a;">140</div>
<div class="t" style="right:2175.5px;top:1228.51px;font-size:24.5px;line-height:24.5px;font-weight:400;color:#2f2a3a;">130</div>
<div class="t" style="left:230px;transform:translateX(-50%);top:1249.18px;font-size:24px;line-height:24px;font-weight:400;color:#2f2a3a;letter-spacing:-0.7px;">01 Nov 2015</div>
<div class="t" style="left:643px;transform:translateX(-50%);top:1249.18px;font-size:24px;line-height:24px;font-weight:400;color:#2f2a3a;letter-spacing:-0.7px;">20 Nov 2015</div>
<div class="t" style="left:1033px;transform:translateX(-50%);top:1249.18px;font-size:24px;line-height:24px;font-weight:400;color:#2f2a3a;letter-spacing:-0.7px;">08 Dec 2015</div>
<div class="t" style="left:1423px;transform:translateX(-50%);top:1249.18px;font-size:24px;line-height:24px;font-weight:400;color:#2f2a3a;letter-spacing:-0.7px;">26 Dec 2015</div>
<div class="t" style="left:1813.5px;transform:translateX(-50%);top:1249.18px;font-size:24px;line-height:24px;font-weight:400;color:#2f2a3a;letter-spacing:-0.7px;">13 Jan 2016</div>
<div class="t" style="right:196.5px;top:1249.18px;font-size:24px;line-height:24px;font-weight:400;color:#2f2a3a;letter-spacing:-0.7px;">31 Jan 2016</div>
<div class="t" style="left:1936.5px;top:770.71px;font-size:23.5px;line-height:23.5px;font-weight:400;color:#2f2a3a;letter-spacing:-0.8px;">Users</div>
<div class="t" style="left:2048px;top:770.71px;font-size:23.5px;line-height:23.5px;font-weight:400;color:#2f2a3a;letter-spacing:-0.9px;">Companies</div>
</body></html>
